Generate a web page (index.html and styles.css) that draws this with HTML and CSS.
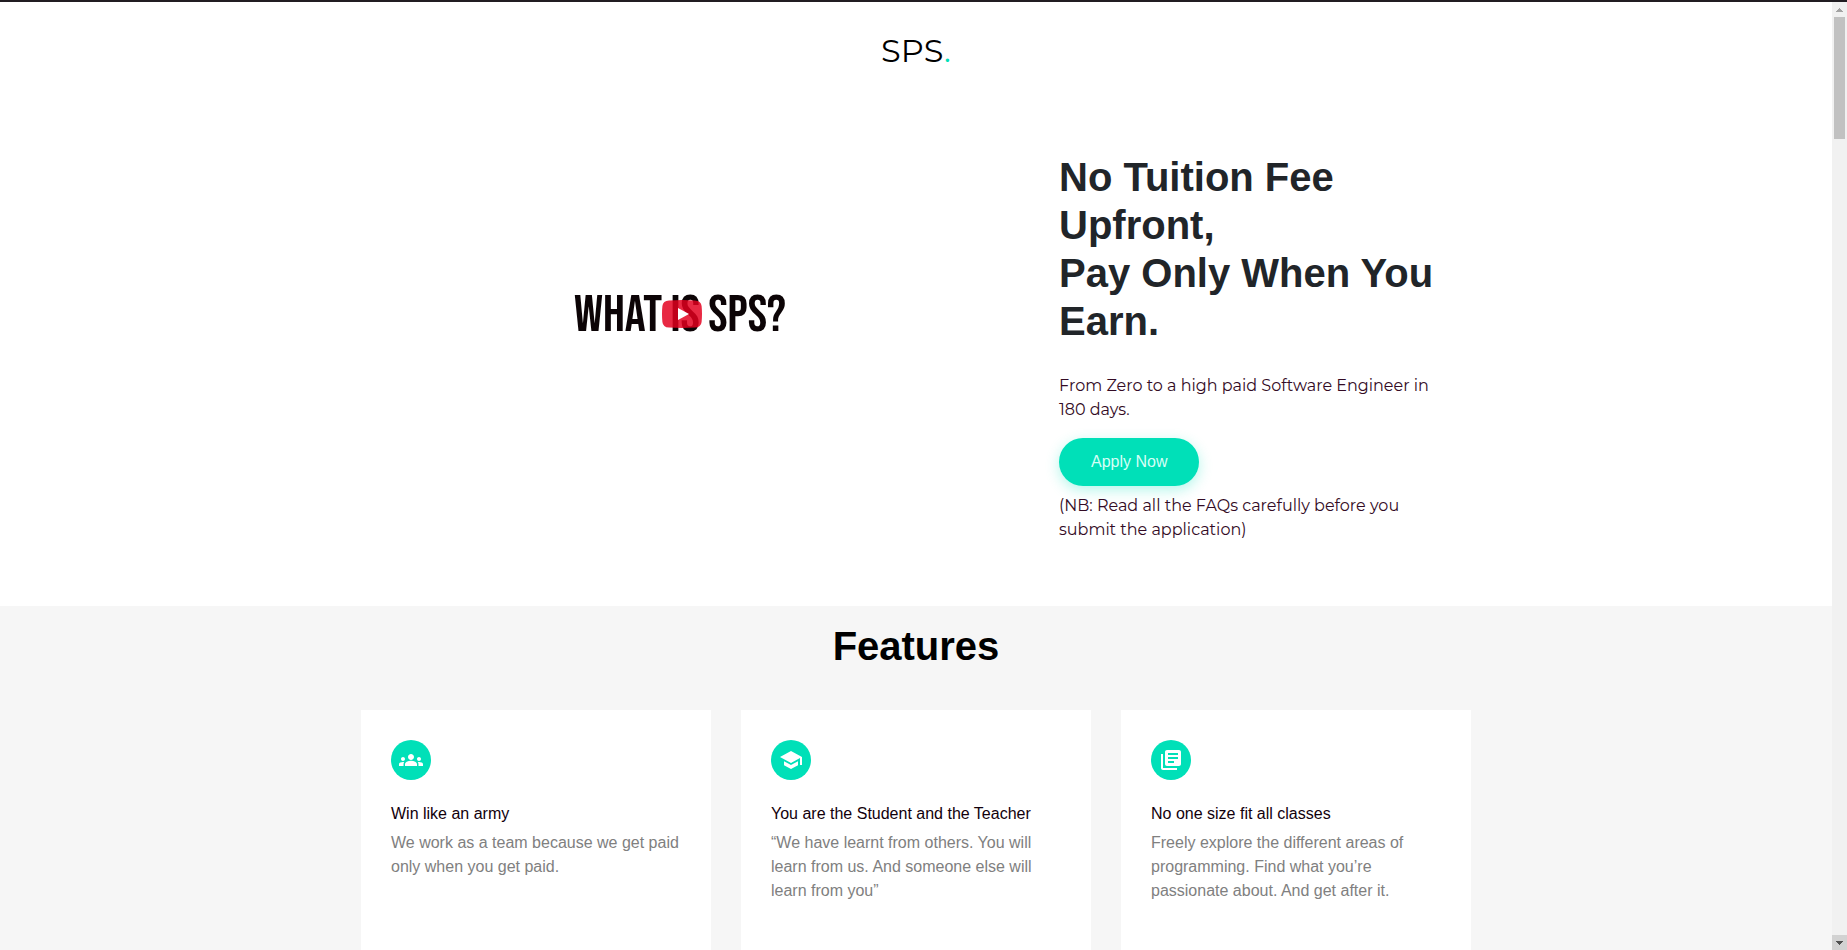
FILE: index.html
```html
<!DOCTYPE html>
<html lang="en">
<head>
<meta charset="utf-8">
<title>SPS.</title>
<link rel="stylesheet" href="styles.css">
</head>
<body>
<div class="window">
  <div class="page">
    <header class="header"><a class="logo" href="#">SPS<span class="logo-dot">.</span></a></header>
    <main>
      <section class="hero container">
        <div class="video">
          <span class="video-title">WHAT IS SPS?</span>
          <button class="play" type="button" aria-label="Play video">
            <svg width="40" height="28" viewBox="0 0 40 28"><path d="M7 .4Q20-.3 33 .4Q39 .6 39.600 6Q40.400 14 39.600 22Q39 27.400 33 27.600Q20 28.300 7 27.600Q1 27.400.4 22Q-.4 14 .4 6Q1 .6 7 .4Z" fill="#e3001f" fill-opacity=".84"/><path d="M16 8l11 6-11 6z" fill="#fff"/></svg>
          </button>
        </div>
        <div class="intro">
          <h1 class="intro-title">No Tuition Fee Upfront,<br>Pay Only When You Earn.</h1>
          <p class="intro-text">From Zero to a high paid Software Engineer in 180 days.</p>
          <a class="apply" href="#">Apply Now</a>
          <p class="intro-text">(NB: Read all the FAQs carefully before you submit the application)</p>
        </div>
      </section>
      <section class="features">
        <h2 class="features-title">Features</h2>
        <div class="cards container">
          <article class="card">
            <span class="badge"><svg width="24" height="24" viewBox="0 0 24 24"><path d="M12 12.750c1.630 0 3.070.39 4.240.9 1.080.48 1.760 1.560 1.760 2.730V18H6v-1.610c0-1.180.68-2.260 1.760-2.730 1.170-.52 2.610-.91 4.240-.91zM4 13c1.100 0 2-.9 2-2s-.9-2-2-2-2 .9-2 2 .9 2 2 2zm1.130 1.100C4.760 14.040 4.390 14 4 14c-.99 0-1.930.21-2.780.58C.48 14.900 0 15.620 0 16.430V18h4.500v-1.610c0-.83.23-1.610.63-2.290zM20 13c1.100 0 2-.9 2-2s-.9-2-2-2-2 .9-2 2 .9 2 2 2zm4 3.430c0-.81-.48-1.530-1.220-1.850C21.930 14.210 20.990 14 20 14c-.39 0-.76.04-1.130.1.400.68.63 1.460.63 2.290V18H24v-1.570zM12 6c1.660 0 3 1.340 3 3s-1.340 3-3 3-3-1.340-3-3 1.340-3 3-3z"/></svg></span>
            <h3 class="card-title">Win like an army</h3>
            <p class="card-text">We work as a team because we get paid only when you get paid.</p>
          </article>
          <article class="card">
            <span class="badge"><svg width="24" height="24" viewBox="0 0 24 24"><path d="M5 13.180v4L12 21l7-3.820v-4L12 17l-7-3.820zM12 3L1 9l11 6 9-4.910V17h2V9L12 3z"/></svg></span>
            <h3 class="card-title">You are the Student and the Teacher</h3>
            <p class="card-text">“We have learnt from others. You will learn from us. And someone else will learn from you”</p>
          </article>
          <article class="card">
            <span class="badge"><svg width="24" height="24" viewBox="0 0 24 24"><path d="M4 6H2v14c0 1.100.9 2 2 2h14v-2H4V6zm16-4H8c-1.100 0-2 .9-2 2v12c0 1.100.9 2 2 2h12c1.100 0 2-.9 2-2V4c0-1.100-.9-2-2-2zm-1 5H9V5h10v2zm0 4H9V9h10v2zm-4 4H9v-2h6v2z"/></svg></span>
            <h3 class="card-title">No one size fit all classes</h3>
            <p class="card-text">Freely explore the different areas of programming. Find what you’re passionate about. And get after it.</p>
          </article>
        </div>
      </section>
    </main>
  </div>
  <div class="scrollbar" aria-hidden="true">
    <div class="scroll-arrow"><svg width="7" height="4" viewBox="0 0 7 4" fill="#a3a3a3" shape-rendering="crispEdges"><path d="M3 0h1v1h1v1h1v1h1v1H0V3h1V2h1V1h1z"/></svg></div>
    <div class="scroll-track"><div class="scroll-thumb"></div></div>
    <div class="scroll-arrow scroll-arrow-down"><svg width="7" height="4" viewBox="0 0 7 4" fill="#505050" shape-rendering="crispEdges"><path d="M0 0h7v1H6v1H5v1H4v1H3V3H2V2H1V1H0z"/></svg></div>
  </div>
</div>
</body>
</html>
```
FILE: styles.css
```css
* {
  box-sizing: border-box;
}

body,
h1,
h2,
h3,
p {
  margin: 0;
}

body {
  font: 16px/24px "Liberation Sans", Arial, sans-serif;
  color: #000;
  background: #fff;
}

.window {
  display: flex;
  height: 100vh;
  border-top: 2px solid #211d22;
  overflow: hidden;
}

.page {
  flex: 1;
  min-width: 0;
  height: 100%;
  overflow: hidden;
}

.container {
  width: 100%;
  max-width: 1110px;
  margin: 0 auto;
}

.header {
  display: flex;
  justify-content: center;
  padding: 25px 0 23px;
}

.logo {
  font: 400 32px/48px Montserrat, Inter, sans-serif;
  color: #000;
  text-decoration: none;
}

.logo-dot {
  color: #00e0b8;
}

.hero {
  display: grid;
  grid-template-columns: minmax(0, 1fr) minmax(0, 384px);
  column-gap: 56px;
  padding: 55px 28px 64px 0;
}

.video {
  position: relative;
  display: flex;
  align-items: center;
  justify-content: center;
  margin-bottom: 68px;
}

.video-title {
  padding: 4px 4px 0 0;
  font: 400 52px/48px "Bebas Neue", "Open Sans Condensed", "DejaVu Sans Condensed", sans-serif;
  color: #0c0406;
}

.play {
  position: absolute;
  inset: 0;
  margin: auto;
  width: 40px;
  height: 28px;
  padding: 0;
  border: 0;
  background: none;
}

.play svg {
  display: block;
}

.intro-title {
  margin-bottom: 29px;
  font-size: 40px;
  line-height: 48px;
  color: #212529;
}

.intro-text {
  font: 16px/24px Montserrat, Inter, sans-serif;
  color: #330b25;
}

.apply {
  display: block;
  width: fit-content;
  margin: 16px 0 8px;
  padding: 12px 32px;
  border-radius: 24px;
  background: #00e0b8;
  box-shadow: 0 4px 14px rgba(0, 224, 184, 0.3);
  color: #d5fff6;
  text-decoration: none;
}

.features {
  padding: 16px 0 64px;
  background: #f6f6f6;
}

.features-title {
  margin-bottom: 40px;
  font-size: 40px;
  line-height: 48px;
  text-align: center;
}

.cards {
  display: grid;
  grid-template-columns: repeat(3, minmax(0, 1fr));
  gap: 30px;
}

.card {
  min-height: 280px;
  padding: 30px;
  background: #fff;
}

.badge {
  display: flex;
  align-items: center;
  justify-content: center;
  width: 40px;
  height: 40px;
  margin-bottom: 22px;
  border-radius: 50%;
  background: #00e0b8;
  fill: #fff;
}

.card-title {
  margin-bottom: 5px;
  font-size: 16px;
  font-weight: 400;
  line-height: 24px;
  color: #12000c;
}

.card-text {
  color: #808080;
}

.scrollbar {
  display: flex;
  flex-direction: column;
  width: 15px;
  background: #f1f1f1;
}

.scroll-arrow {
  display: flex;
  align-items: center;
  justify-content: center;
  height: 15px;
}

.scroll-arrow-down {
  background: #d2d2d2;
}

.scroll-track {
  flex: 1;
  padding: 0 2px;
}

.scroll-thumb {
  height: 122px;
  background: #c1c1c1;
}
```
